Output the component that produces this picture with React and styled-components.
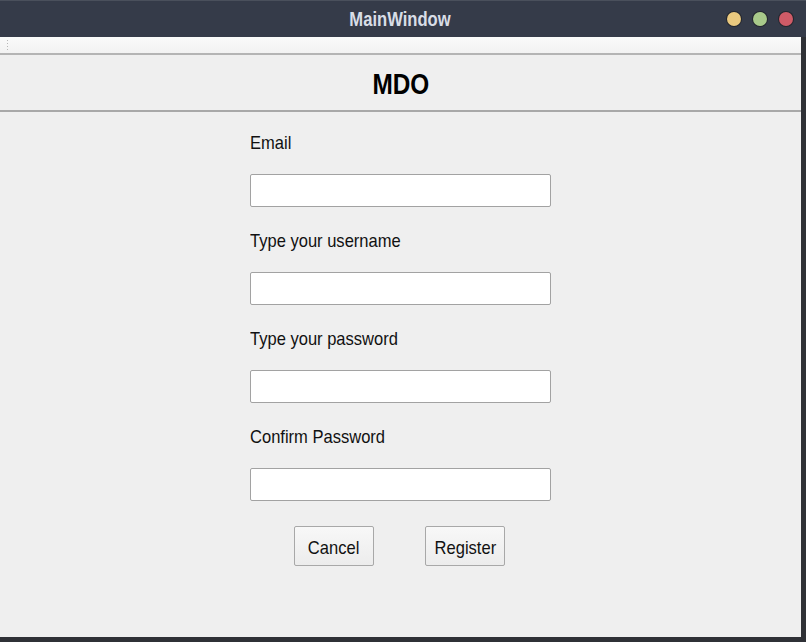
import styled, { createGlobalStyle } from "styled-components";

const GlobalStyle = createGlobalStyle`
  html, body {
    margin: 0;
    padding: 0;
    background: #2f3136;
    overflow: hidden;
  }
  #root {
    width: 806px;
    height: 642px;
  }
`;

// the reference uses a condensed face; squeeze Liberation Sans to match its widths
const Narrow = styled.span`
  display: inline-block;
  transform: scaleX(${(p) => p.$scale || 0.87});
  transform-origin: ${(p) => p.$origin || "center"};
  white-space: nowrap;
`;

const Frame = styled.div`
  width: 801px;
  height: 637px;
  display: flex;
  flex-direction: column;
  background: #efefef;
  font-family: "Liberation Sans", Arial, sans-serif;
`;

const TitleBar = styled.div`
  height: 37px;
  flex-shrink: 0;
  background: #353b49;
  display: flex;
  align-items: center;
  justify-content: center;
  position: relative;
  border-top: 1px solid #4a505c;
  box-sizing: border-box;
  margin-right: -5px;
`;

const Title = styled.div`
  color: #d8dde6;
  font-size: 20px;
  font-weight: bold;
  margin-right: 5px;
`;

const Lights = styled.div`
  position: absolute;
  right: 13px;
  top: 11px;
  display: flex;
  gap: 12px;
`;

const Light = styled.span`
  width: 14px;
  height: 14px;
  border-radius: 50%;
  background: ${(p) => p.color};
  box-shadow: 0 0 0 1px #23262e;
`;

const ToolStrip = styled.div`
  height: 16px;
  flex-shrink: 0;
  background: linear-gradient(#fafafa, #f2f2f2);
  border-bottom: 2px solid #b4b4b4;
  display: flex;
  align-items: center;
  padding-left: 6px;
`;

const Grip = styled.span`
  width: 3px;
  height: 12px;
  background-image: radial-gradient(circle, #b8b8b8 0.8px, transparent 1px);
  background-size: 3px 3px;
`;

const Header = styled.div`
  height: 55px;
  flex-shrink: 0;
  display: flex;
  align-items: center;
  justify-content: center;
  border-bottom: 2px solid #a8a8a8;
`;

const Heading = styled.h1`
  margin: 0;
  font-size: 29px;
  font-weight: bold;
  color: #000;
  padding-top: 4px;
`;

const Body = styled.div`
  flex: 1;
  display: flex;
  justify-content: center;
  padding-top: 19px;
`;

const Form = styled.div`
  width: 301px;
  display: flex;
  flex-direction: column;
`;

const Label = styled.div`
  font-size: 19px;
  color: #111;
  height: 24px;
  line-height: 24px;
  margin-bottom: 19px;
`;

const Input = styled.input`
  display: block;
  width: 301px;
  height: 33px;
  box-sizing: border-box;
  border: 1px solid #a2a2a2;
  border-radius: 2px;
  background: #fff;
  margin: 0 0 22px;
  outline: none;
`;

const Buttons = styled.div`
  display: flex;
  justify-content: center;
  gap: 51px;
  margin: 3px 2px 0 0;
`;

const Button = styled.button`
  width: 80px;
  height: 40px;
  box-sizing: border-box;
  border: 1px solid #a8a8a8;
  border-radius: 2px;
  background: linear-gradient(#f8f8f8, #ececec);
  font-family: inherit;
  font-size: 19px;
  color: #111;
  padding: 4px 0 0;
`;

const fields = ["Email", "Type your username", "Type your password", "Confirm Password"];

export default function App() {
  return (
    <Frame>
      <GlobalStyle />
      <TitleBar>
        <Title>
          <Narrow $scale={0.83}>MainWindow</Narrow>
        </Title>
        <Lights>
          <Light color="#eac97f" />
          <Light color="#a8c98a" />
          <Light color="#cf5b67" />
        </Lights>
      </TitleBar>
      <ToolStrip>
        <Grip />
      </ToolStrip>
      <Header>
        <Heading>
          <Narrow $scale={0.84}>MDO</Narrow>
        </Heading>
      </Header>
      <Body>
        <Form>
          {fields.map((f) => (
            <div key={f}>
              <Label>
                <Narrow $origin="left">{f}</Narrow>
              </Label>
              <Input type={f.includes("assword") ? "password" : "text"} />
            </div>
          ))}
          <Buttons>
            <Button>
              <Narrow>Cancel</Narrow>
            </Button>
            <Button>
              <Narrow>Register</Narrow>
            </Button>
          </Buttons>
        </Form>
      </Body>
    </Frame>
  );
}
